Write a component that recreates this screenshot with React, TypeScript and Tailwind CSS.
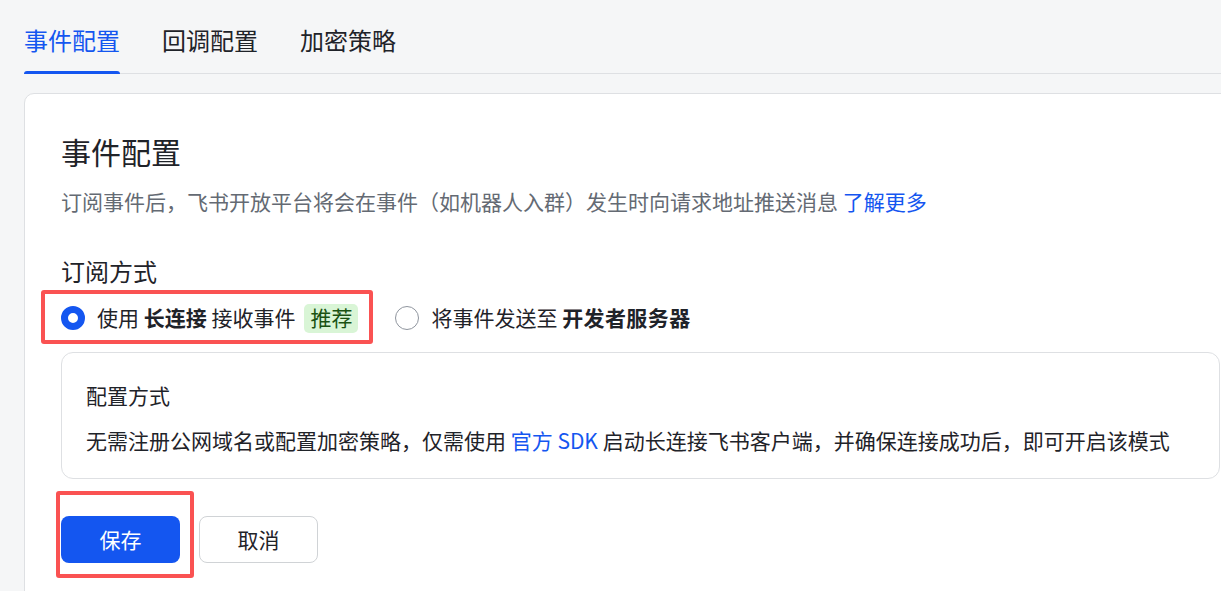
import { useState } from 'react';

type Mode = 'long' | 'server';

const tabs = ['事件配置', '回调配置', '加密策略'];

function Radio({ checked }: { checked: boolean }) {
  return checked ? (
    <span className="w-6 h-6 rounded-full border-[7px] border-[#1456f0] bg-white shrink-0" />
  ) : (
    <span className="w-6 h-6 rounded-full border-[1.5px] border-[#8f959e] bg-white shrink-0" />
  );
}

export default function App() {
  const [mode, setMode] = useState<Mode>('long');
  const [tab, setTab] = useState(0);

  return (
    <div className="w-[1221px] h-[591px] overflow-hidden bg-[#f5f6f7] text-[#1f2329] font-['Noto_Sans_CJK_SC','Noto_Sans',sans-serif]">
      {/* Tab bar */}
      <div className="pl-6">
        <div className="flex gap-[42px] border-b border-[#dee0e3]">
          {tabs.map((t, i) => (
            <button
              key={t}
              onClick={() => setTab(i)}
              className={`relative pt-[22px] pb-[15px] text-[24px] leading-[36px] ${tab === i ? 'text-[#1456f0]' : 'text-[#1f2329]'}`}
            >
              {t}
              {tab === i && (
                <span className="absolute left-0 right-0 -bottom-px h-[3px] rounded-t-[3px] bg-[#1456f0]" />
              )}
            </button>
          ))}
        </div>
      </div>

      {/* Card */}
      <div className="relative ml-6 mt-[19px] w-[1233px] bg-white border border-[#dee0e3] rounded-[10px] px-[36px] pt-[35px] pb-10">
        <h1 className="text-[30px] leading-[45px] font-normal">事件配置</h1>
        <p className="mt-[11px] text-[21px] leading-[32px] text-[#646a73]">
          订阅事件后，飞书开放平台将会在事件（如机器人入群）发生时向请求地址推送消息 <a className="text-[#1456f0]">了解更多</a>
        </p>

        <div className="mt-[36px] text-[24px] leading-[36px]">订阅方式</div>

        <div className="mt-[13px] h-8 flex items-center text-[21px]">
          <button onClick={() => setMode('long')} className="flex items-center">
            <Radio checked={mode === 'long'} />
            <span className="ml-3 whitespace-pre">使用 <b className="font-bold">长连接</b> 接收事件</span>
            <span className="ml-[9px] h-[29px] px-[6px] flex items-center rounded-[5px] bg-[#d9f5d6] text-[#1a5212] text-[21px]">推荐</span>
          </button>
          <button onClick={() => setMode('server')} className="ml-[37px] flex items-center">
            <Radio checked={mode === 'server'} />
            <span className="ml-3 whitespace-pre">将事件发送至 <b className="font-bold tracking-[0.4px]">开发者服务器</b></span>
          </button>
        </div>

        <div className="mt-[18px] border border-[#dee0e3] rounded-[12px] px-6 pt-[26px] pb-[22px] text-[21px] leading-[32px]">
          <div>配置方式</div>
          <div className="mt-[13px]">
            无需注册公网域名或配置加密策略，仅需使用 <a className="text-[#1456f0]">官方 SDK</a> 启动长连接飞书客户端，并确保连接成功后，即可开启该模式
          </div>
        </div>

        <div className="mt-[37px] flex gap-[19px]">
          <button className="w-[119px] h-[47px] rounded-[8px] bg-[#1456f0] text-white text-[21px]">保存</button>
          <button className="w-[119px] h-[47px] rounded-[8px] bg-white border border-[#d0d3d6] text-[21px]">取消</button>
        </div>

        {/* annotation boxes */}
        <div className="absolute left-[16px] top-[196px] w-[332px] h-[54px] border-[4px] border-[#fa5252] rounded-[3px] pointer-events-none" />
        <div className="absolute left-[31px] top-[397px] w-[138px] h-[87px] border-[4px] border-[#fa5252] rounded-[3px] pointer-events-none" />
      </div>
    </div>
  );
}
